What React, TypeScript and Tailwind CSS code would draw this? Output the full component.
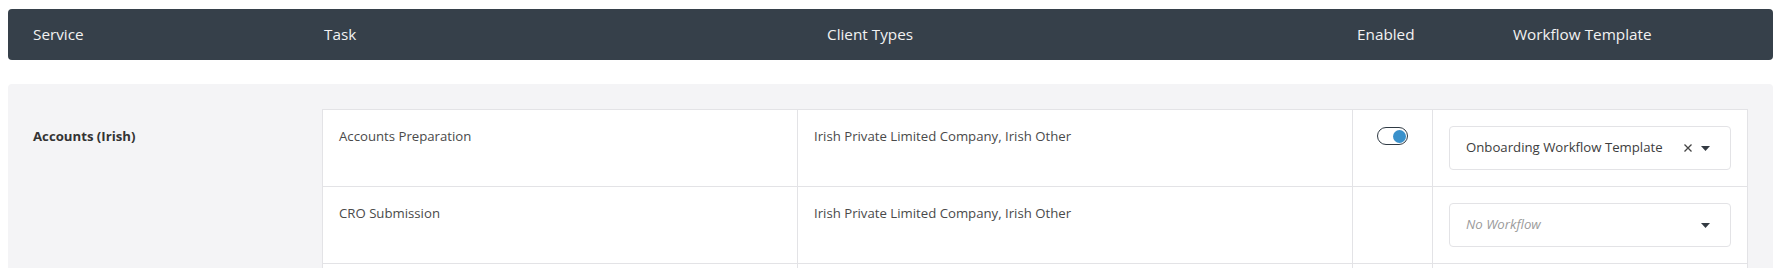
import React from 'react';

type Row = {
  task: string;
  clientTypes: string;
  enabled: boolean;
  workflow: string | null;
};

const rows: Row[] = [
  { task: 'Accounts Preparation', clientTypes: 'Irish Private Limited Company, Irish Other', enabled: true, workflow: 'Onboarding Workflow Template' },
  { task: 'CRO Submission', clientTypes: 'Irish Private Limited Company, Irish Other', enabled: false, workflow: null },
];

function Toggle() {
  return (
    <div className="flex h-[18px] w-[31px] items-center justify-end rounded-full border-[1.5px] border-[#2f3a44] bg-white pr-[1px]">
      <div className="h-[13px] w-[13px] rounded-full bg-[#3a91cb]" />
    </div>
  );
}

function Caret() {
  return (
    <svg width="9" height="5" viewBox="0 0 9 5" className="shrink-0">
      <path d="M0 0 L9 0 L4.5 5 Z" fill="#333a42" />
    </svg>
  );
}

function WorkflowSelect({ value }: { value: string | null }) {
  return (
    <div className="flex h-[44px] items-center rounded-[4px] border border-[#e3e3e6] bg-white pl-4 pr-[20px]">
      {value ? (
        <span className="flex-1 truncate text-[13.2px] text-[#3d3d3d]">{value}</span>
      ) : (
        <span className="flex-1 truncate text-[13.2px] italic text-[#9b9b9b]">No Workflow</span>
      )}
      {value && (
        <svg width="8" height="8" viewBox="0 0 8 8" className="mr-[9px] shrink-0">
          <path d="M0.5 0.5 L7.5 7.5 M7.5 0.5 L0.5 7.5" stroke="#444" strokeWidth="1.3" />
        </svg>
      )}
      <Caret />
    </div>
  );
}

export default function App() {
  return (
    <div className="min-h-screen bg-white px-2 pt-[9px] font-['Open_Sans',sans-serif]">
      {/* Header */}
      <div className="flex h-[51px] items-center rounded-[4px] bg-[#36404a] text-[15.3px] text-[#f2f2f2]">
        <div className="w-[316px] pl-[25px]">Service</div>
        <div className="w-[503px]">Task</div>
        <div className="w-[530px]">Client Types</div>
        <div className="w-[156px]">Enabled</div>
        <div>Workflow Template</div>
      </div>

      {/* Service group */}
      <div className="mt-[24px] flex rounded-[4px] bg-[#f4f4f6] pr-[25px] pt-[25px]">
        <div className="w-[314px] pl-[25px] pt-[17px] text-[13.2px] font-bold leading-[20px] text-[#333]">
          Accounts (Irish)
        </div>
        <div className="w-[1426px] border-l border-t border-[#e3e3e6] bg-white">
          {rows.map((row) => (
            <div key={row.task} className="grid grid-cols-[475px_555px_80px_315px]">
              <div className="border-b border-r border-[#e3e3e6] p-4 text-[13.2px] leading-[20px] text-[#4a4a4a]">
                {row.task}
              </div>
              <div className="border-b border-r border-[#e3e3e6] p-4 text-[13.2px] leading-[20px] text-[#4a4a4a]">
                {row.clientTypes}
              </div>
              <div className="flex justify-center border-b border-r border-[#e3e3e6] pt-[17px]">
                {row.enabled && <Toggle />}
              </div>
              <div className="border-b border-r border-[#e3e3e6] p-4">
                <WorkflowSelect value={row.workflow} />
              </div>
            </div>
          ))}
          {/* next row, below the fold */}
          <div className="grid h-[76px] grid-cols-[475px_555px_80px_315px]">
            <div className="border-r border-[#e3e3e6]" />
            <div className="border-r border-[#e3e3e6]" />
            <div className="border-r border-[#e3e3e6]" />
            <div className="border-r border-[#e3e3e6]" />
          </div>
        </div>
      </div>
    </div>
  );
}
